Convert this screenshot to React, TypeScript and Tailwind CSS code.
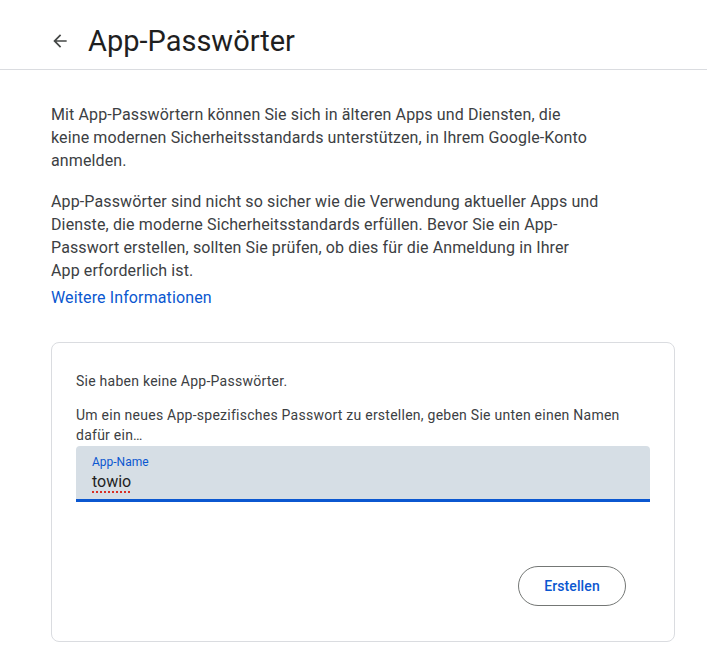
import React from "react";

export default function App() {
  return (
    <div className="w-[707px] h-[667px] bg-white overflow-hidden text-[#1f1f1f]" style={{ fontFamily: "Roboto, 'Noto Sans', sans-serif" }}>
      <header className="h-[70px] border-b border-[#dadce0] flex items-center pl-[50px] pt-[13px]">
        <svg width="20" height="20" viewBox="0 0 24 24" className="text-[#444746]" fill="currentColor">
          <path d="M20 11H7.83l5.59-5.59L12 4l-8 8 8 8 1.41-1.41L7.83 13H20v-2z" />
        </svg>
        <h1 className="ml-[18px] text-[29px] leading-[34px] text-[#1f1f1f]">App-Passwörter</h1>
      </header>
      <div className="pl-[51px] pr-[32px]">
        <p className="mt-[33px] text-[16px] tracking-[0.12px] leading-[23px] text-[#3c4043]">
          Mit App-Passwörtern können Sie sich in älteren Apps und Diensten, die<br />
          keine modernen Sicherheitsstandards unterstützen, in Ihrem Google-Konto<br />
          anmelden.
        </p>
        <p className="mt-[18px] text-[16px] tracking-[0.12px] leading-[23px] text-[#3c4043]">
          App-Passwörter sind nicht so sicher wie die Verwendung aktueller Apps und<br />
          Dienste, die moderne Sicherheitsstandards erfüllen. Bevor Sie ein App-<br />
          Passwort erstellen, sollten Sie prüfen, ob dies für die Anmeldung in Ihrer<br />
          App erforderlich ist.
        </p>
        <a className="block mt-[3px] text-[16px] tracking-[0.12px] leading-[26px] text-[#0b57d0]">Weitere Informationen</a>
        <div className="mt-[31px] w-[624px] h-[300px] border border-[#dadce0] rounded-[8px] px-[24px] pt-[28px]">
          <p className="text-[14px] tracking-[0.25px] leading-[20px] text-[#3c4043]">Sie haben keine App-Passwörter.</p>
          <p className="mt-[14px] text-[14px] tracking-[0.25px] leading-[20px] text-[#3c4043]">
            Um ein neues App-spezifisches Passwort zu erstellen, geben Sie unten einen Namen<br />
            dafür ein…
          </p>
          <div className="mt-[1px] h-[56px] bg-[#d6dee5] rounded-t-[4px] border-b-[3px] border-[#0b57d0] px-[16px] pt-[8px]">
            <div className="text-[12px] leading-[16px] text-[#0b57d0]">App-Name</div>
            <div className="mt-[1px] text-[16px] leading-[22px] text-[#1f1f1f] underline decoration-dotted decoration-[#d93025] decoration-[1.5px] underline-offset-[4px]">towio</div>
          </div>
          <div className="flex justify-end mt-[64px] pr-[24px]">
            <button className="w-[108px] h-[40px] rounded-full border border-[#747775] text-[14px] font-medium tracking-[0.1px] text-[#0b57d0]">Erstellen</button>
          </div>
        </div>
      </div>
    </div>
  );
}
